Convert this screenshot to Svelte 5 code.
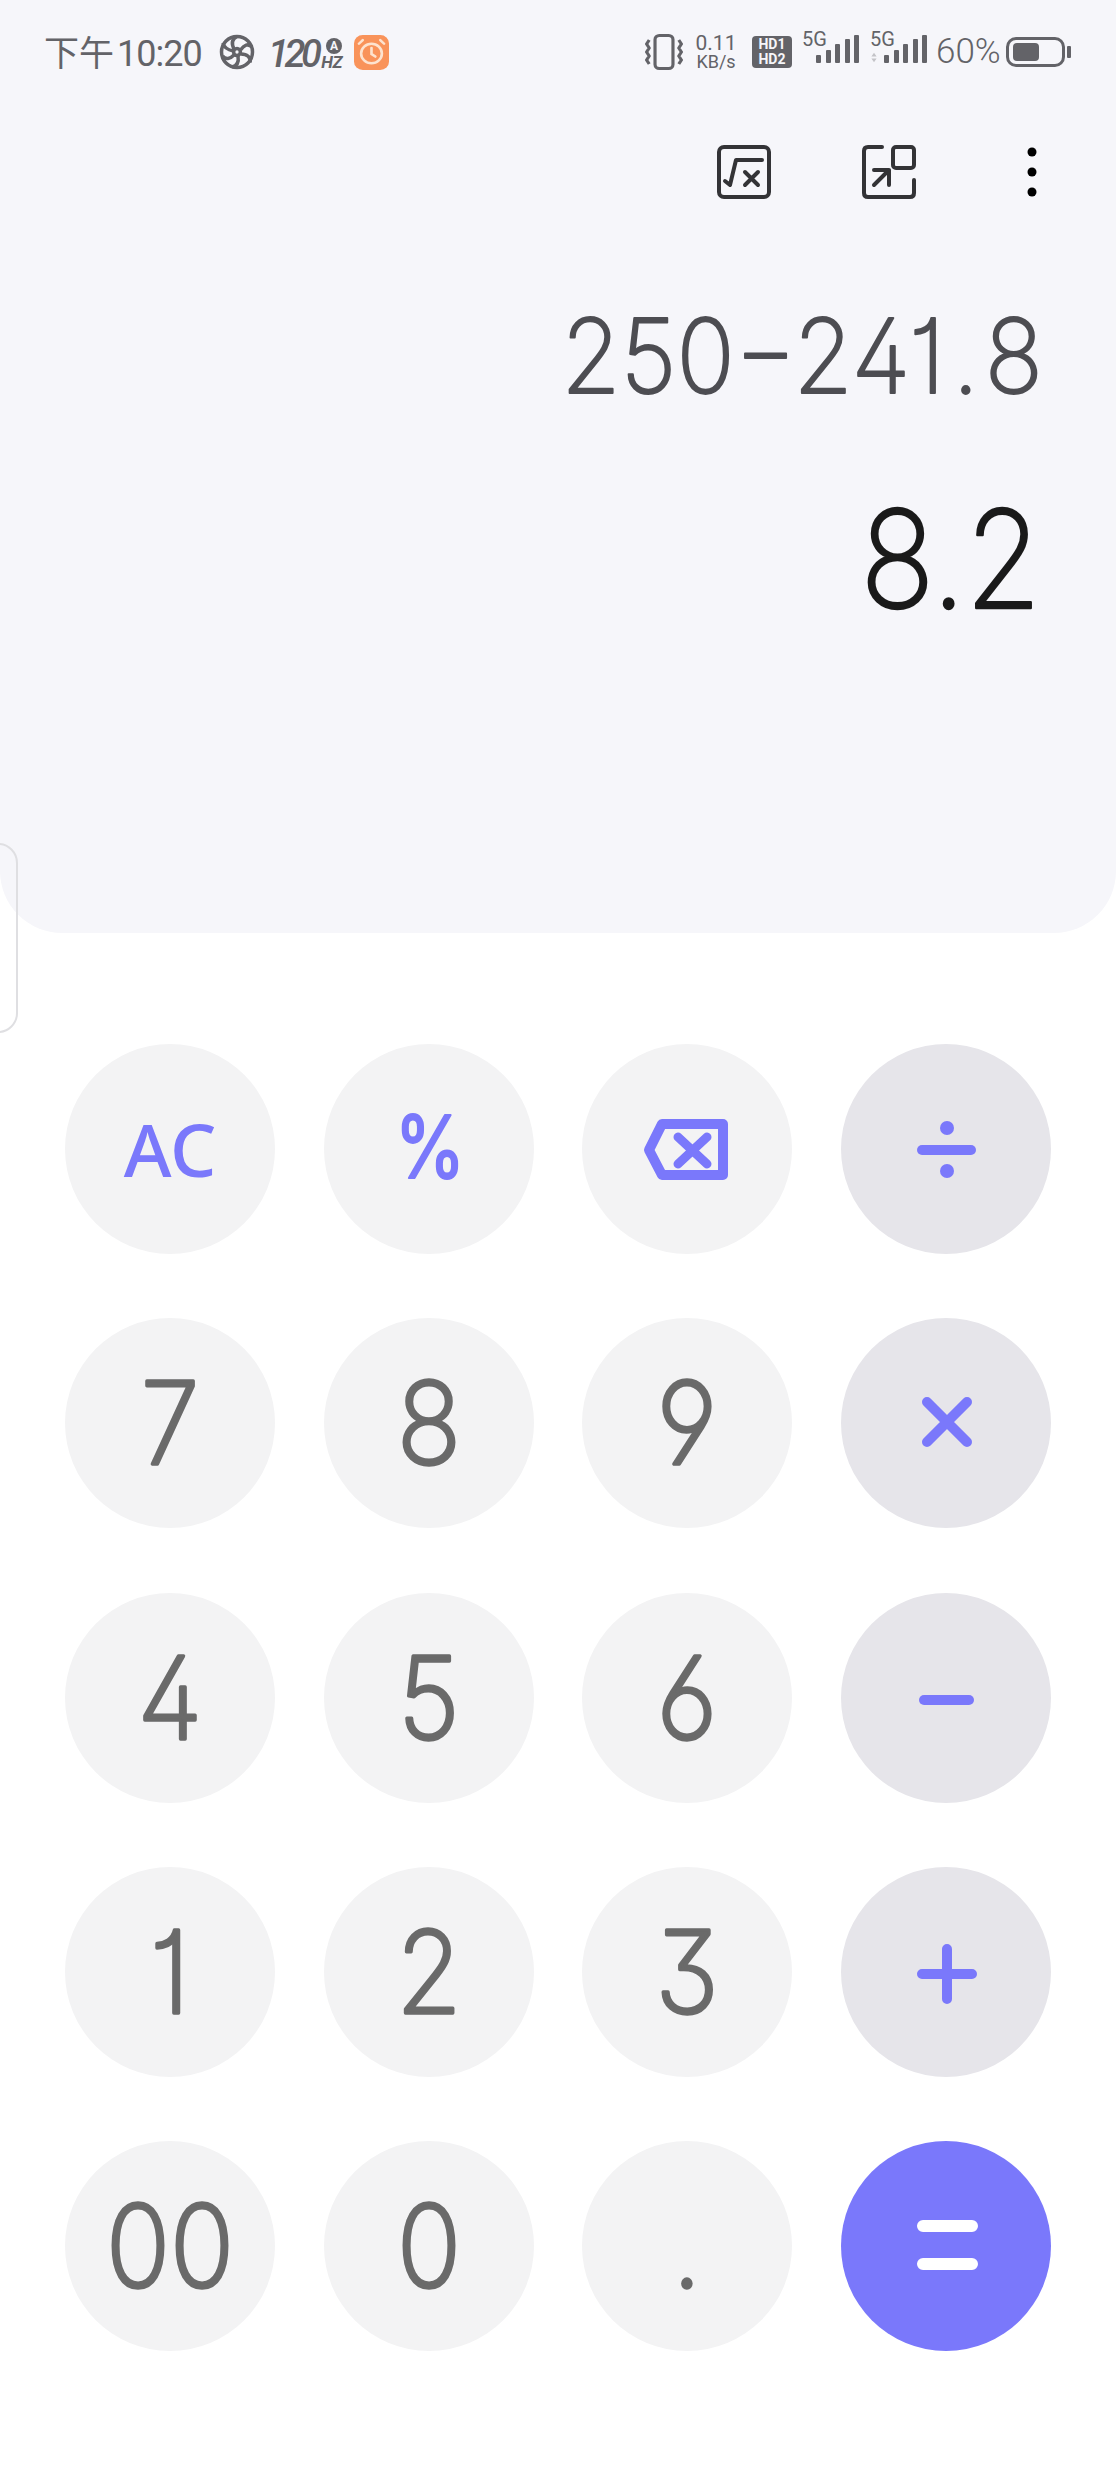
<script>
  const rows = [
    [{ t: 'AC', k: 'ac' }, { t: '%', k: 'pct' }, { k: 'back' }, { k: 'div', op: true }],
    [{ t: '7' }, { t: '8' }, { t: '9' }, { k: 'mul', op: true }],
    [{ t: '4' }, { t: '5' }, { t: '6' }, { k: 'sub', op: true }],
    [{ t: '1' }, { t: '2' }, { t: '3' }, { k: 'add', op: true }],
    [{ t: '00' }, { t: '0' }, { t: '.' }, { k: 'eq', eq: true }]
  ];
  const keys = rows.flat();
</script>

<div class="screen">
  <section class="panel">
    <header class="status">
      <div class="group">
        <span class="time"><span class="cjk">下午</span>10:20</span>
        <svg class="i-shutter" viewBox="0 0 36 38" aria-hidden="true">
          <circle cx="18" cy="19" r="15.5" />
          <circle cx="18" cy="19" r="3.4" />
          <path d="M15 16C12 10 13 6 18 3.500M21.500 17C25 12 29 10 33 14M22 21C28 21 32 24 31 29.500M19 23C20 29 18 33 13 34M15 22C11 26 7 27 3.500 23M14.500 18C9 17 5 15 4 10" />
        </svg>
        <span class="hz"><span class="hz-num">120</span><span class="hz-side"><span class="hz-a">A</span><span class="hz-unit">HZ</span></span></span>
        <svg class="i-alarm" viewBox="0 0 32 34" preserveAspectRatio="none" aria-hidden="true">
          <rect width="32" height="34" rx="8" class="alarm-bg" />
          <circle cx="16" cy="18" r="9.500" class="alarm-l" />
          <path d="M16 12.500V18.500L19.500 21M4.500 8.500L8 5M27.500 8.500L24 5" class="alarm-l" />
        </svg>
      </div>
      <div class="group">
        <svg class="i-vib" viewBox="0 0 36 36" preserveAspectRatio="none" aria-hidden="true">
          <rect x="9.500" y="1.500" width="17" height="33" rx="4" />
          <path d="M4 6L1.500 10L4 14L1.500 18L4 22L1.500 26L4 30M32 6L34.500 10L32 14L34.500 18L32 22L34.500 26L32 30" />
        </svg>
        <span class="speed"><span class="s1">0.11</span><span class="s2">KB/s</span></span>
        <span class="hd"><span>HD1</span><span>HD2</span></span>
        <span class="net">
          <span class="g">5G</span>
          <span class="bars"><i class="b1"></i><i class="b2"></i><i class="b3"></i><i class="b4"></i><i class="b5"></i></span>
        </span>
        <span class="net net2">
          <span class="g">5G</span>
          <svg class="arrows" viewBox="0 0 8 16" preserveAspectRatio="none" aria-hidden="true"><path d="M4 1L7.500 6.500H.5ZM4 15L.5 9.500H7.500Z" /></svg>
          <span class="bars"><i class="b1"></i><i class="b2"></i><i class="b3"></i><i class="b4"></i><i class="b5"></i></span>
        </span>
        <span class="pct">60%</span>
        <span class="batt"><span class="level"></span></span>
        <span class="nib"></span>
      </div>
    </header>

    <div class="tools">
      <svg class="tool" viewBox="0 0 56 56" aria-hidden="true">
        <rect x="3" y="3" width="50" height="50" rx="5" />
        <path d="M9 37L14 41L20 16H46M29 28L42 41M42 28L29 41" />
      </svg>
      <svg class="tool tool2" viewBox="0 0 56 56" aria-hidden="true">
        <path d="M21 3H7Q3 3 3 7V49Q3 53 7 53H49Q53 53 53 49V36" />
        <rect x="32" y="3" width="21" height="21" rx="3" />
        <path d="M13 41L28 26M13 26H28V41" />
      </svg>
      <svg class="tool dots" viewBox="0 0 10 50" aria-hidden="true">
        <circle cx="5" cy="5" r="4.500" /><circle cx="5" cy="25" r="4.500" /><circle cx="5" cy="45" r="4.500" />
      </svg>
    </div>

    <svg class="line expr" viewBox="0 0 1116 132">
      <text transform="translate(1043 105) scale(.935 1)" text-anchor="end">250−241<tspan dx="8">.</tspan><tspan dx="6">8</tspan></text>
    </svg>
    <svg class="line res" viewBox="0 0 1116 176">
      <text transform="translate(1041 140) scale(.9 1)" text-anchor="end">8.2</text>
    </svg>
  </section>

  <div class="handle"></div>

  <section class="pad">
    {#each keys as key}
      <div class="key" class:op={key.op} class:eq={key.eq}>
        <svg viewBox="0 0 210 210" aria-hidden={key.t ? undefined : 'true'}>
          {#if key.k === 'ac'}
            <text class="ac" x="105" y="133" text-anchor="middle">AC</text>
          {:else if key.k === 'pct'}
            <text class="percent" transform="translate(106 134) scale(.84 1)" text-anchor="middle">%</text>
          {:else if key.k === 'back'}
            <path class="ic s10" d="M67 106L80 80H141V131H80Z" />
            <path class="ic s9" d="M96 93L125 120M125 93L96 120" />
          {:else if key.k === 'div'}
            <path class="ic s10" d="M81 106H130" />
            <circle class="dot" cx="106" cy="84" r="7" /><circle class="dot" cx="106" cy="127" r="7" />
          {:else if key.k === 'mul'}
            <path class="ic s10" d="M86 84L126 124M126 84L86 124" />
          {:else if key.k === 'sub'}
            <path class="ic s10" d="M83 107H128" />
          {:else if key.k === 'add'}
            <path class="ic s10" d="M81 107H131M106 82V132" />
          {:else if key.k === 'eq'}
            <path class="ic s12 white" d="M82 85H131M82 123H131" />
          {:else}
            <text class="num" transform="translate(105 146) scale(.93 1)" text-anchor="middle">{key.t}</text>
          {/if}
        </svg>
      </div>
    {/each}
  </section>
</div>

<style>
  :global(body) { margin: 0; background: #fff; }
  .screen { position: relative; width: 1116px; height: 2480px; overflow: hidden; background: #fff; font-family: "Roboto", sans-serif; }

  .panel { height: 933px; background: #f6f6fa; border-radius: 0 0 62px 62px; display: flex; flex-direction: column; }

  .status { height: 104px; box-sizing: border-box; padding: 0 45px 0 44px; display: flex; justify-content: space-between; align-items: center; color: #636368; }
  .group { display: flex; align-items: center; }
  .time { font-size: 36px; line-height: 42px; width: 158px; white-space: nowrap; letter-spacing: -1px; }
  .cjk { font-family: "Noto Sans CJK SC", sans-serif; font-weight: 400; font-size: 35px; letter-spacing: 0; margin-right: 3px; }
  svg { display: block; }
  .i-shutter { width: 38px; height: 38px; margin-left: 16px; fill: none; stroke: #636368; stroke-width: 3.500; }
  .hz { display: flex; align-items: flex-end; margin-left: 12px; width: 72px; height: 36px; }
  .hz-num { font: italic 500 38px/32px "Roboto", sans-serif; letter-spacing: -4.500px; }
  .hz-side { display: flex; flex-direction: column; align-items: flex-end; margin-left: 4px; }
  .hz-a { width: 16px; height: 16px; border-radius: 50%; background: #636368; color: #f6f6fa; font: 700 12px/16px "Roboto", sans-serif; text-align: center; margin-bottom: 1px; }
  .hz-unit { font: italic 700 17px/15px "Roboto", sans-serif; letter-spacing: -.5px; }
  .i-alarm { width: 35px; height: 35px; margin-left: 14px; }
  .alarm-bg { fill: #f9935a; }
  .alarm-l { fill: none; stroke: #fde3cf; stroke-width: 2.400; stroke-linecap: round; }

  .i-vib { width: 38px; height: 36px; fill: none; stroke: #636368; stroke-width: 3; stroke-linejoin: round; }
  .speed { display: flex; flex-direction: column; align-items: center; width: 38px; margin-left: 14px; }
  .s1 { font-size: 21px; line-height: 19px; }
  .s2 { font-size: 18px; line-height: 18px; }
  .hd { width: 40px; height: 32px; margin-left: 17px; border-radius: 4px; background: #636368; color: #f6f6fa; display: flex; flex-direction: column; align-items: center; justify-content: center; font: 700 14px/15px "Roboto", sans-serif; }
  .net { position: relative; width: 57px; height: 32px; margin-left: 10px; }
  .net2 { margin-left: 11px; }
  .g { position: absolute; left: 0; top: -9px; font-size: 20px; line-height: 24px; white-space: nowrap; }
  .bars { position: absolute; left: 14px; bottom: 5px; display: flex; align-items: flex-end; gap: 4.600px; }
  .bars i { display: block; width: 5px; border-radius: 1px; background: #636368; }
  .b1 { height: 8px; } .b2 { height: 13px; } .b3 { height: 19px; } .b4 { height: 24px; } .b5 { height: 28px; }
  .arrows { position: absolute; left: 1px; bottom: 5px; width: 6px; height: 11px; fill: #c4c4c8; }
  .pct { font-size: 35px; font-weight: 300; line-height: 36px; margin-left: 9px; width: 66px; white-space: nowrap; }
  .batt { box-sizing: border-box; width: 59px; height: 30px; margin-left: 4px; padding: 3px 4px; border: 3px solid #636368; border-radius: 10px; display: block; }
  .level { display: block; width: 26px; height: 18px; background: #636368; border-radius: 4px; }
  .nib { width: 4px; height: 12px; margin-left: 2px; background: #636368; border-radius: 1px; }

  .tools { display: flex; align-items: center; height: 56px; margin-top: 40px; padding-left: 716px; }
  .tool { width: 56px; height: 56px; fill: none; stroke: #333336; stroke-width: 4; stroke-linecap: round; stroke-linejoin: round; }
  .tool2 { margin-left: 89px; }
  .dots { width: 10px; height: 50px; margin-left: 110px; fill: #000; stroke: none; }

  .line { width: 1116px; flex: none; }
  .line text { font-family: "Inter", sans-serif; font-weight: 200; stroke-linecap: round; stroke-linejoin: round; font-feature-settings: "cv01", "cv02", "cv03", "cv04", "cv09"; }
  .expr { height: 132px; margin-top: 88px; }
  .expr text { font-size: 103px; fill: #4d4d52; stroke: #4d4d52; stroke-width: 2; }
  .res { height: 176px; margin-top: 48px; }
  .res text { font-size: 136px; fill: #1a1a1a; stroke: #1a1a1a; stroke-width: 2.500; }

  .handle { position: absolute; left: -22px; top: 843px; width: 36px; height: 186px; border: 2px solid #dfdfe2; border-radius: 22px; }

  .pad { display: grid; grid-template-columns: repeat(4, 210px); column-gap: 48.700px; row-gap: 64.250px; padding: 111px 0 0 65px; }
  .key { width: 210px; height: 210px; border-radius: 50%; background: #f3f3f4; }
  .key.op { background: #e6e5ea; }
  .key.eq { background: #7a78fb; }
  .key svg { width: 210px; height: 210px; }
  .num { font-family: "Inter", sans-serif; font-weight: 200; font-size: 114px; fill: #6a6a6a; stroke: #6a6a6a; stroke-width: 3.500; stroke-linecap: round; stroke-linejoin: round; font-feature-settings: "cv01", "cv02", "cv03", "cv04", "cv09"; }
  .ac { font-family: "Noto Sans", sans-serif; font-weight: 500; font-size: 73px; fill: #7a78fb; }
  .percent { font-family: "Inter", sans-serif; font-weight: 400; font-size: 86px; fill: #7a78fb; stroke: #7a78fb; stroke-width: 2; stroke-linejoin: round; stroke-linecap: round; }
  .ic { fill: none; stroke: #7a78fb; stroke-linecap: round; stroke-linejoin: round; }
  .s9 { stroke-width: 9; } .s10 { stroke-width: 10; } .s12 { stroke-width: 12; }
  .white { stroke: #fff; }
  .dot { fill: #7a78fb; }
</style>
